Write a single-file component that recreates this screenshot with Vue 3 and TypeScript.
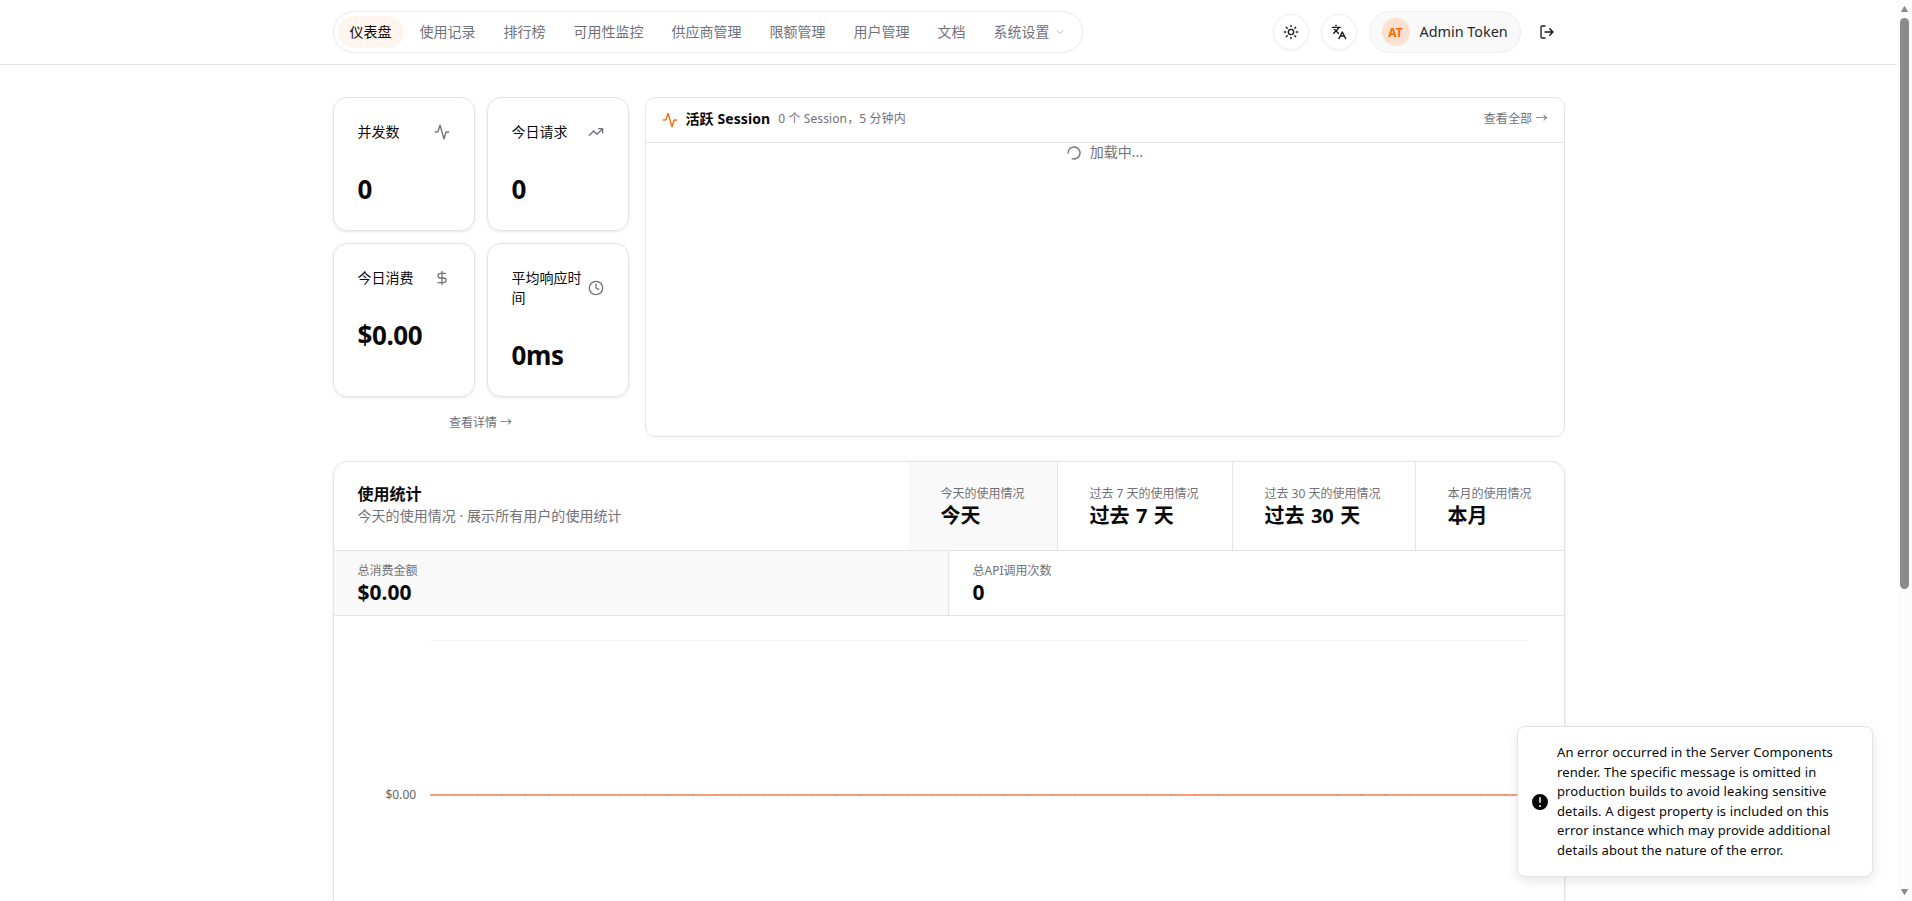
<script setup lang="ts">
interface Stat { label: string; value: string; icon: 'activity' | 'trend' | 'dollar' | 'clock' }
interface Range { hint: string; name: string; active: boolean }

const navItems: string[] = ['仪表盘', '使用记录', '排行榜', '可用性监控', '供应商管理', '限额管理', '用户管理', '文档']

const stats: Stat[] = [
  { label: '并发数', value: '0', icon: 'activity' },
  { label: '今日请求', value: '0', icon: 'trend' },
  { label: '今日消费', value: '$0.00', icon: 'dollar' },
  { label: '平均响应时间', value: '0ms', icon: 'clock' },
]

const ranges: Range[] = [
  { hint: '今天的使用情况', name: '今天', active: true },
  { hint: '过去 7 天的使用情况', name: '过去 7 天', active: false },
  { hint: '过去 30 天的使用情况', name: '过去 30 天', active: false },
  { hint: '本月的使用情况', name: '本月', active: false },
]

const chartWidth = 1099
const step = chartWidth / 46
const ticks: number[] = Array.from({ length: 45 }, (_, i) => (i + 1) * step)
const tickOpacity = (x: number): number => 0.15 + 0.35 * Math.abs(Math.sin(x * 0.0185))
</script>

<template>
  <div class="window">
    <div class="page">
      <header class="topbar">
        <div class="container topbar-inner">
          <nav class="nav">
            <a v-for="(item, i) in navItems" :key="item" class="nav-item" :class="{ active: i === 0 }">{{ item }}</a>
            <a class="nav-item">系统设置<svg class="chevron" viewBox="0 0 24 24"><path d="m6 9 6 6 6-6" /></svg></a>
          </nav>
          <div class="actions">
            <button class="round" aria-label="theme">
              <svg class="ico" viewBox="0 0 24 24"><circle cx="12" cy="12" r="4" /><path d="M12 2v2M12 20v2M4.93 4.93l1.41 1.41M17.66 17.66l1.41 1.41M2 12h2M20 12h2M6.34 17.66l-1.41 1.41M19.07 4.93l-1.41 1.41" /></svg>
            </button>
            <button class="round" aria-label="language">
              <svg class="ico" viewBox="0 0 24 24"><path d="m5 8 6 6M4 14l6-6 2-3M2 5h12M7 2h1M22 22l-5-10-5 10M14 18h6" /></svg>
            </button>
            <div class="user">
              <span class="avatar">AT</span>
              <span class="user-name">Admin Token</span>
            </div>
            <button class="logout" aria-label="logout">
              <svg class="ico" viewBox="0 0 24 24"><path d="m16 17 5-5-5-5M21 12H9M9 21H5a2 2 0 0 1-2-2V5a2 2 0 0 1 2-2h4" /></svg>
            </button>
          </div>
        </div>
      </header>

      <main class="container main">
        <section class="overview">
          <div class="left">
            <div class="cards">
              <article v-for="s in stats" :key="s.label" class="card">
                <div class="card-head">
                  <span class="card-title">{{ s.label }}</span>
                  <svg class="ico muted" viewBox="0 0 24 24">
                    <path v-if="s.icon === 'activity'" d="M22 12h-2.48a2 2 0 0 0-1.93 1.46l-2.35 8.36a.25.25 0 0 1-.48 0L9.24 2.18a.25.25 0 0 0-.48 0l-2.35 8.36A2 2 0 0 1 4.49 12H2" />
                    <path v-else-if="s.icon === 'trend'" d="M16 7h6v6M22 7l-8.5 8.5-5-5L2 17" />
                    <path v-else-if="s.icon === 'dollar'" d="M12 2v20M17 5H9.5a3.5 3.5 0 0 0 0 7h5a3.5 3.5 0 0 1 0 7H6" />
                    <g v-else><circle cx="12" cy="12" r="10" /><path d="M12 6v6l4 2" /></g>
                  </svg>
                </div>
                <div class="card-value">{{ s.value }}</div>
              </article>
            </div>
            <a class="more">查看详情 →</a>
          </div>
          <div class="sessions">
            <div class="sessions-head">
              <svg class="ico orange" viewBox="0 0 24 24"><path d="M22 12h-2.48a2 2 0 0 0-1.93 1.46l-2.35 8.36a.25.25 0 0 1-.48 0L9.24 2.18a.25.25 0 0 0-.48 0l-2.35 8.36A2 2 0 0 1 4.49 12H2" /></svg>
              <strong class="sessions-title">活跃 Session</strong>
              <span class="sessions-sub">0 个 Session，5 分钟内</span>
              <a class="all">查看全部 →</a>
            </div>
            <div class="loading">
              <svg class="ico spinner" viewBox="0 0 24 24"><path d="M21 12a9 9 0 1 1-6.219-8.56" /></svg>
              <span>加载中...</span>
            </div>
          </div>
        </section>

        <section class="usage">
          <div class="usage-head">
            <div class="usage-text">
              <h2>使用统计</h2>
              <p>今天的使用情况 · 展示所有用户的使用统计</p>
            </div>
            <div v-for="r in ranges" :key="r.name" class="range" :class="{ active: r.active }">
              <span class="hint">{{ r.hint }}</span>
              <span class="range-name">{{ r.name }}</span>
            </div>
          </div>
          <div class="metrics">
            <div class="metric active"><span class="hint">总消费金额</span><span class="metric-value">$0.00</span></div>
            <div class="metric"><span class="hint">总API调用次数</span><span class="metric-value">0</span></div>
          </div>
          <div class="chart">
            <span class="axis">$0.00</span>
            <svg class="plot" :width="chartWidth" height="310" :viewBox="`0 0 ${chartWidth} 310`">
              <rect x="0" y="0" :width="chartWidth" height="1" fill="#f6f6f7" />
              <rect x="0" y="154" :width="chartWidth" height="2" fill="#f79f7b" />
              <rect v-for="x in ticks" :key="x" :x="x - 0.5" y="154" width="1" height="2" fill="#e8501c" :opacity="tickOpacity(x)" />
            </svg>
          </div>
        </section>
      </main>
    </div>

    <div class="scrollbar">
      <svg width="15" height="18" viewBox="0 0 15 18"><path d="M7.5 6.5 10.5 11.500H4.5Z" fill="#8b8b8b" stroke="#8b8b8b" stroke-linejoin="round" /></svg>
      <div class="thumb"></div>
      <svg class="down" width="15" height="18" viewBox="0 0 15 18"><path d="M4.5 6.500h6L7.5 11.500Z" fill="#8b8b8b" stroke="#8b8b8b" stroke-linejoin="round" /></svg>
    </div>

    <div class="toast">
      <svg class="toast-icon" viewBox="0 0 20 20"><path fill-rule="evenodd" d="M18 10a8 8 0 1 1-16 0 8 8 0 0 1 16 0Zm-8-5a.75.75 0 0 1 .75.75v4.5a.75.75 0 0 1-1.5 0v-4.5A.75.75 0 0 1 10 5Zm0 10a1 1 0 1 0 0-2 1 1 0 0 0 0 2Z" /></svg>
      <div class="toast-text">
        <div>An error occurred in the Server Components</div>
        <div>render. The specific message is omitted in</div>
        <div>production builds to avoid leaking sensitive</div>
        <div>details. A digest property is included on this</div>
        <div>error instance which may provide additional</div>
        <div>details about the nature of the error.</div>
      </div>
    </div>
  </div>
</template>

<style>
html, body { margin: 0; background: #fff; overflow: hidden; }
</style>

<style scoped>
* { box-sizing: border-box; }
.window { position: relative; display: flex; height: 901px; overflow: hidden; font-family: "Noto Sans", "Noto Sans CJK SC", sans-serif; color: #09090b; font-size: 14px; }
.page { flex: 1; min-width: 0; height: 901px; overflow: hidden; }
.container { width: 1232px; margin: 0 auto; }
.topbar { height: 65px; border-bottom: 1px solid #e4e4e7; }
.topbar-inner { height: 64px; display: flex; align-items: center; justify-content: space-between; }
.nav { display: flex; gap: 4px; padding: 4px; border: 1px solid #e9e9eb; border-radius: 21px; }
.nav-item { display: flex; align-items: center; gap: 4px; height: 32px; padding: 0 12px; border-radius: 16px; color: #71717a; line-height: 20px; white-space: nowrap; }
.nav-item.active { background: #fff5ef; color: #09090b; }
.chevron { width: 12px; height: 12px; fill: none; stroke: #b5b5ba; stroke-width: 2; stroke-linecap: round; stroke-linejoin: round; }
.ico { flex: none; width: 16px; height: 16px; fill: none; stroke: #18181b; stroke-width: 2; stroke-linecap: round; stroke-linejoin: round; }
.ico.muted { stroke: #71717a; }
.ico.orange { stroke: #ff6900; }
.ico.spinner { stroke: #71717a; transform: rotate(180deg); }
.actions { display: flex; align-items: center; gap: 12px; }
button { padding: 0; background: none; border: 0; display: flex; align-items: center; justify-content: center; width: 36px; height: 36px; }
.round { border: 1px solid #eeeeef; border-radius: 50%; box-shadow: 0 1px 2px rgba(0, 0, 0, 0.05); }
.logout { margin-left: -4px; }
.user { display: flex; align-items: center; gap: 10px; height: 42px; width: 152px; padding: 0 12px; border: 1px solid #eeeeef; border-radius: 21px; background: #f9f9f9; }
.avatar { display: flex; align-items: center; justify-content: center; flex: none; width: 28px; height: 28px; border-radius: 50%; background: #fde1d0; color: #ff6900; font-size: 12px; font-weight: 700; }
.user-name { font-size: 14.4px; line-height: 20px; color: #27272a; white-space: nowrap; }

.main { padding-top: 32px; }
.overview { display: grid; grid-template-columns: 296px 920px; gap: 16px; height: 340px; }
.left { display: flex; flex-direction: column; }
.cards { display: grid; grid-template-columns: 1fr 1fr; grid-template-rows: 134px 154px; gap: 12px; }
.card { min-width: 0; border: 1px solid #e4e4e7; border-radius: 14px; box-shadow: 0 1px 3px rgba(0, 0, 0, 0.1); padding: 24px 24px 0; }
.card-head { display: flex; align-items: center; justify-content: space-between; gap: 5px; }
.card-title { line-height: 20px; word-break: break-all; }
.card-value { margin-top: 31px; font-size: 26px; font-weight: 700; line-height: 32px; letter-spacing: -0.4px; }
.more { margin-top: 18px; text-align: center; font-size: 12px; line-height: 16px; color: #71717a; }
.sessions { border: 1px solid #e4e4e7; border-radius: 10px; }
.sessions-head { display: flex; align-items: center; height: 45px; padding: 0 16px; border-bottom: 1px solid #e4e4e7; line-height: 20px; }
.sessions-title { margin: -2px 0 0 8px; font-size: 14px; letter-spacing: 0.1px; }
.sessions-sub { margin: -2px 0 0 8px; font-size: 12px; letter-spacing: 0.1px; color: #71717a; }
.all { margin: -2px 0 0 auto; font-size: 12px; letter-spacing: 0.1px; color: #71717a; }
.loading { display: flex; justify-content: center; align-items: center; gap: 8px; height: 20px; line-height: 18px; color: #71717a; }
.loading span { margin-top: -2px; }

.usage { margin-top: 24px; height: 600px; border: 1px solid #e4e4e7; border-radius: 14px; box-shadow: 0 1px 3px rgba(0, 0, 0, 0.1); }
.usage-head { display: grid; grid-template-columns: 1fr 148px 175px 183px 149px; height: 89px; border-bottom: 1px solid #e4e4e7; }
.usage-text { padding: 21px 24px 0; }
h2 { margin: 0; font-size: 16px; line-height: 22px; font-weight: 700; }
p { margin: 0; line-height: 22px; letter-spacing: 0.05px; color: #71717a; }
.range { display: flex; flex-direction: column; padding: 24px 0 0 32px; border-left: 1px solid #e4e4e7; white-space: nowrap; }
.range.active { background: #f9f9f9; border-left: 0; }
.hint { font-size: 12px; line-height: 16px; color: #71717a; }
.range-name { margin-top: 2px; font-size: 20px; line-height: 24px; font-weight: 700; word-spacing: 1.2px; }
.metrics { display: grid; grid-template-columns: 615px 615px; height: 65px; border-bottom: 1px solid #e4e4e7; }
.metric { display: flex; flex-direction: column; padding: 12px 24px 0; }
.metric + .metric { margin-left: -1px; border-left: 1px solid #e4e4e7; }
.metric.active { background: #f9f9f9; }
.metric-value { font-size: 21px; font-weight: 700; line-height: 27px; }
.chart { display: flex; padding: 24px 0 0 52px; }
.axis { width: 31px; margin-top: 147px; font-size: 12px; line-height: 16px; color: #666; }
.plot { display: block; margin-left: 13px; }

.scrollbar { flex: none; display: flex; flex-direction: column; width: 15px; height: 901px; background: #fcfcfc; }
.thumb { width: 9px; height: 571px; margin-left: 3px; border-radius: 5px; background: #8b8b8b; }
.down { margin-top: auto; }

.toast { position: absolute; right: 39px; bottom: 24px; display: flex; align-items: center; gap: 7px; width: 356px; height: 151px; padding: 16px 14px; background: #fff; border: 1px solid #e4e4e7; border-radius: 8px; box-shadow: 0 4px 12px rgba(0, 0, 0, 0.1); }
.toast-icon { flex: none; width: 20px; height: 20px; margin-left: -2px; fill: #09090b; }
.toast-text { font-size: 13px; line-height: 19.5px; letter-spacing: 0.12px; white-space: nowrap; }
</style>
